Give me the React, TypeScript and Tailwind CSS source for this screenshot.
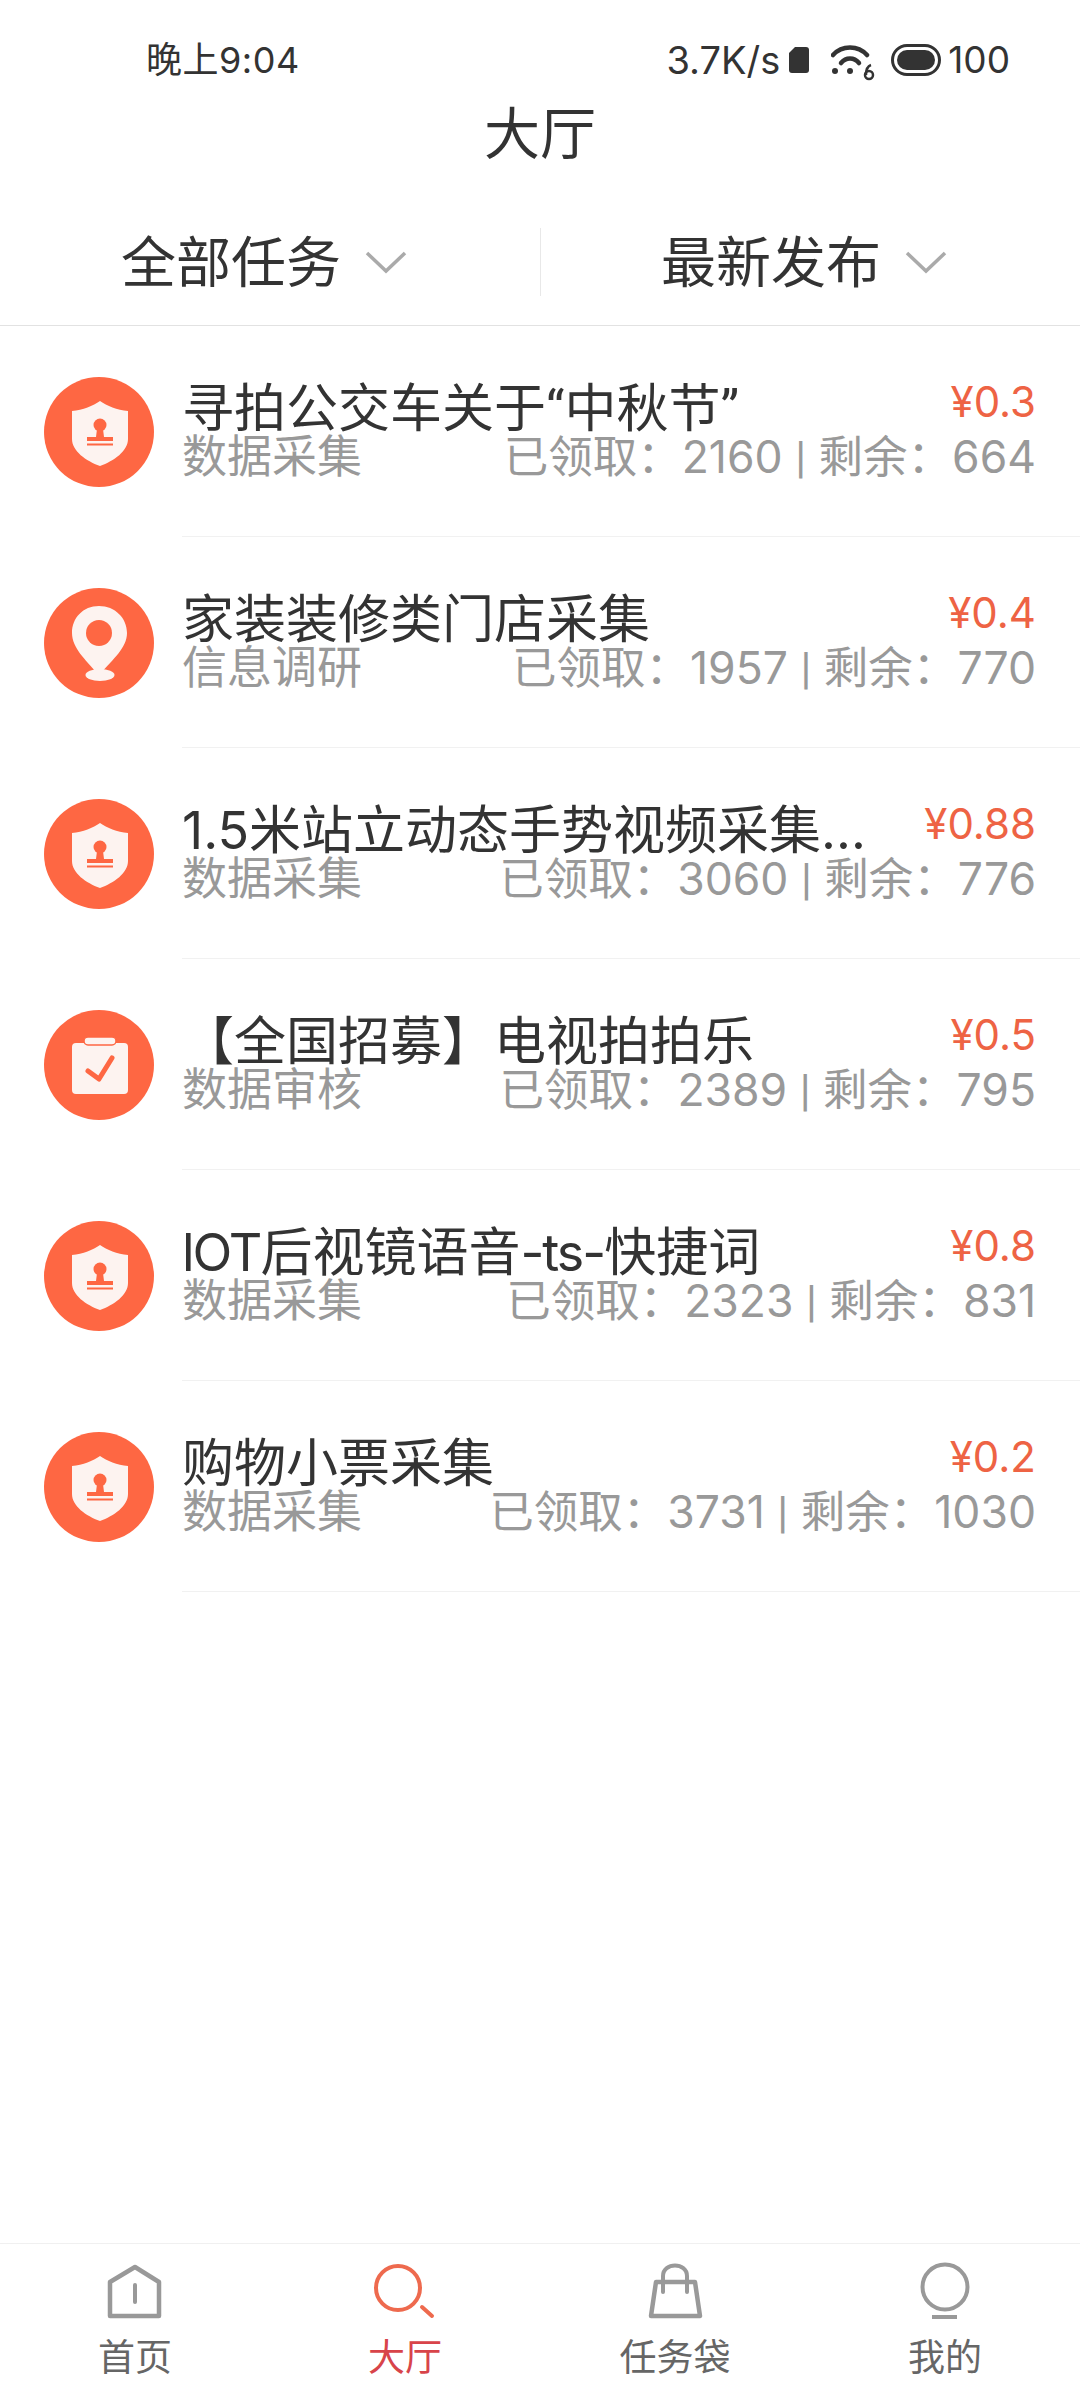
import React from "react";

type Task = {
  title: React.ReactNode;
  kind: string;
  price: string;
  got: string;
  left: string;
  icon: "shield" | "pin" | "check";
};

// 拉丁字符收紧一点,贴近原图字宽
const tight = "tracking-[-2px]";

const tasks: Task[] = [
  {
    title: (
      <>
        寻拍公交车关于<span className="font-['Roboto']">“</span>中秋节<span className="font-['Roboto']">”</span>
      </>
    ),
    kind: "数据采集",
    price: "¥0.3",
    got: "2160",
    left: "664",
    icon: "shield",
  },
  { title: "家装装修类门店采集", kind: "信息调研", price: "¥0.4", got: "1957", left: "770", icon: "pin" },
  { title: "1.5米站立动态手势视频采集…", kind: "数据采集", price: "¥0.88", got: "3060", left: "776", icon: "shield" },
  { title: "【全国招募】电视拍拍乐", kind: "数据审核", price: "¥0.5", got: "2389", left: "795", icon: "check" },
  {
    title: (
      <>
        <span className={tight}>lOT</span>后视镜语音<span className={tight}>-ts-</span>快捷词
      </>
    ),
    kind: "数据采集",
    price: "¥0.8",
    got: "2323",
    left: "831",
    icon: "shield",
  },
  { title: "购物小票采集", kind: "数据采集", price: "¥0.2", got: "3731", left: "1030", icon: "shield" },
];

function TaskIcon({ icon }: { icon: Task["icon"] }) {
  return (
    <svg width="110" height="110" viewBox="0 0 110 110" className="shrink-0">
      <circle cx="55" cy="55" r="55" fill="#FE6743" />
      {icon === "shield" && (
        <>
          <path d="M56 24 C63 29 73 33 84 34 L84 62 C84 74 70 84 56 89 C42 84 28 74 28 62 L28 34 C39 33 49 29 56 24 Z" fill="#FDF3F0" />
          <circle cx="56" cy="48" r="6.5" fill="#FE6743" />
          <path d="M53 52 H59 L60 60 H69 V64 H43 V60 H52 Z" fill="#FE6743" />
          <rect x="43" y="66.5" width="26" height="2" fill="#FE6743" />
        </>
      )}
      {icon === "pin" && (
        <>
          <path d="M55 18 C71 18 83 30 83 45 C83 60 68 72 58 84 L52 84 C42 72 28 60 28 45 C28 30 39 18 55 18 Z" fill="#FDF3F0" />
          <ellipse cx="56" cy="87" rx="14.5" ry="6" fill="#FDF3F0" />
          <circle cx="55" cy="45" r="13" fill="#FE6743" />
        </>
      )}
      {icon === "check" && (
        <>
          <rect x="28" y="33" width="56" height="51" rx="4" fill="#FDF3F0" />
          <rect x="40" y="27" width="32" height="8" rx="4" fill="#FDF3F0" stroke="#FE6743" strokeWidth="1.5" />
          <path d="M44 61 L55 69 L68 48" fill="none" stroke="#FE6743" strokeWidth="5" strokeLinecap="round" strokeLinejoin="round" />
        </>
      )}
    </svg>
  );
}

function Chevron() {
  return (
    <svg width="42" height="24" viewBox="0 0 42 24" className="shrink-0">
      <path d="M2 3 L21 21 L40 3" fill="none" stroke="#aaaaaa" strokeWidth="3.5" />
    </svg>
  );
}

function StatusBar() {
  return (
    <div className="h-[96px] pt-[24px] pl-[146px] pr-[70px] flex justify-between items-start text-[#333333]">
      <span className="text-[36px] leading-[72px] h-[72px] tracking-[0.5px]">晚上9:04</span>
      <div className="flex items-center h-[72px]">
        <span className="text-[38px] leading-[72px]">3.7K/s</span>
        <svg width="20" height="26" viewBox="0 0 20 26" className="ml-[9px]">
          <path d="M6 0 H17 C19 0 20 1 20 3 V23 C20 25 19 26 17 26 H3 C1 26 0 25 0 23 V6 Z" fill="#333333" />
        </svg>
        <svg width="46" height="38" viewBox="0 0 46 38" className="ml-[22px] mt-[6px]">
          <path d="M2 11 C11 1 27 1 36 11" fill="none" stroke="#333333" strokeWidth="4.5" strokeLinecap="round" />
          <path d="M10 19 C15 13 23 13 28 19" fill="none" stroke="#333333" strokeWidth="4.5" strokeLinecap="round" />
          <circle cx="4" cy="27" r="3" fill="#333333" />
          <circle cx="19" cy="27" r="3" fill="#333333" />
          <circle cx="38" cy="31" r="4" fill="none" stroke="#333333" strokeWidth="2.5" />
          <path d="M35 31 C35 25 37 22 40 21" fill="none" stroke="#333333" strokeWidth="2.5" />
        </svg>
        <svg width="50" height="32" viewBox="0 0 50 32" className="ml-[14px]">
          <rect x="1.5" y="1.5" width="47" height="29" rx="14.5" fill="none" stroke="#333333" strokeWidth="3" />
          <rect x="6" y="6" width="38" height="20" rx="10" fill="#333333" />
        </svg>
        <span className="text-[37px] leading-[72px] ml-[7px]">100</span>
      </div>
    </div>
  );
}

function FilterBar() {
  return (
    <div className="pt-[56px] pb-[29px] border-b border-[#e2e2e2] flex">
      <div className="w-[540px] h-[68px] pl-[121px] flex items-center gap-[24px]">
        <span className="text-[55px] leading-[68px] text-[#333333]">全部任务</span>
        <Chevron />
      </div>
      <div className="w-px h-[68px] bg-[#e8e8e8]" />
      <div className="flex-1 h-[68px] pl-[120px] flex items-center gap-[24px]">
        <span className="text-[55px] leading-[68px] text-[#333333]">最新发布</span>
        <Chevron />
      </div>
    </div>
  );
}

function TaskRow({ task }: { task: Task }) {
  return (
    <div className="h-[211px] pl-[44px] flex items-center">
      <TaskIcon icon={task.icon} />
      <div className="ml-[28px] flex-1 min-w-0 h-full pt-[58px] pr-[44px] border-b border-[#f1f1f1]">
        <div className="flex justify-between items-start h-[49px]">
          <span className="whitespace-nowrap text-[52px] leading-[50px] text-[#333333]">{task.title}</span>
          <span className="text-[42px] leading-[36px] text-[#EE6344]">{task.price}</span>
        </div>
        <div className="flex justify-between items-center h-[48px]">
          <span className="text-[45px] leading-[48px] text-[#999999]">{task.kind}</span>
          <span className="text-[44.5px] leading-[48px] text-[#999999]">
            已领取：{task.got} <span className="font-['Roboto']">|</span> 剩余：{task.left}
          </span>
        </div>
      </div>
    </div>
  );
}

function NavItem({ label, active, children }: { label: string; active?: boolean; children: React.ReactNode }) {
  return (
    <div className="flex-1 flex flex-col items-center pt-[18px]">
      <svg width="64" height="58" viewBox="0 0 64 58">
        {children}
      </svg>
      <span className={active ? "mt-[19px] text-[37px] leading-[37px] text-[#D8444A]" : "mt-[19px] text-[37px] leading-[37px] text-[#666666]"}>
        {label}
      </span>
    </div>
  );
}

function BottomNav() {
  return (
    <div className="mt-auto h-[157px] border-t border-[#f0f0f0] flex">
      <NavItem label="首页">
        <path d="M7 20 L32 5 L56 20 V54 H7 Z" fill="none" stroke="#999999" strokeWidth="4.5" strokeLinejoin="round" />
        <path d="M32 23 V40" stroke="#999999" strokeWidth="4" strokeLinecap="round" />
      </NavItem>
      <NavItem label="大厅" active>
        <circle cx="25" cy="26" r="22" fill="none" stroke="#EE6A4E" strokeWidth="4" />
        <path d="M49 45 L59 54" stroke="#EE6A4E" strokeWidth="4" strokeLinecap="round" />
      </NavItem>
      <NavItem label="任务袋">
        <path d="M13 20 H52 L57 54 H8 Z" fill="none" stroke="#999999" strokeWidth="4.5" strokeLinejoin="round" />
        <path d="M20 30 V14 C20 0 44 0 44 14 V30" fill="none" stroke="#999999" strokeWidth="4" strokeLinecap="round" />
      </NavItem>
      <NavItem label="我的">
        <circle cx="32" cy="25" r="22.5" fill="none" stroke="#999999" strokeWidth="4" />
        <path d="M19 55 H44" stroke="#999999" strokeWidth="4" />
      </NavItem>
    </div>
  );
}

export default function App() {
  return (
    <div className="w-[1080px] h-[2400px] bg-white flex flex-col font-['Inter','Noto_Sans_CJK_SC',sans-serif]">
      <StatusBar />
      {/* 标题 */}
      <div className="h-[76px] flex items-center justify-center text-[56px] text-[#333333]">大厅</div>
      <FilterBar />
      <div>
        {tasks.map((t) => (
          <TaskRow key={t.got} task={t} />
        ))}
      </div>
      <BottomNav />
    </div>
  );
}
